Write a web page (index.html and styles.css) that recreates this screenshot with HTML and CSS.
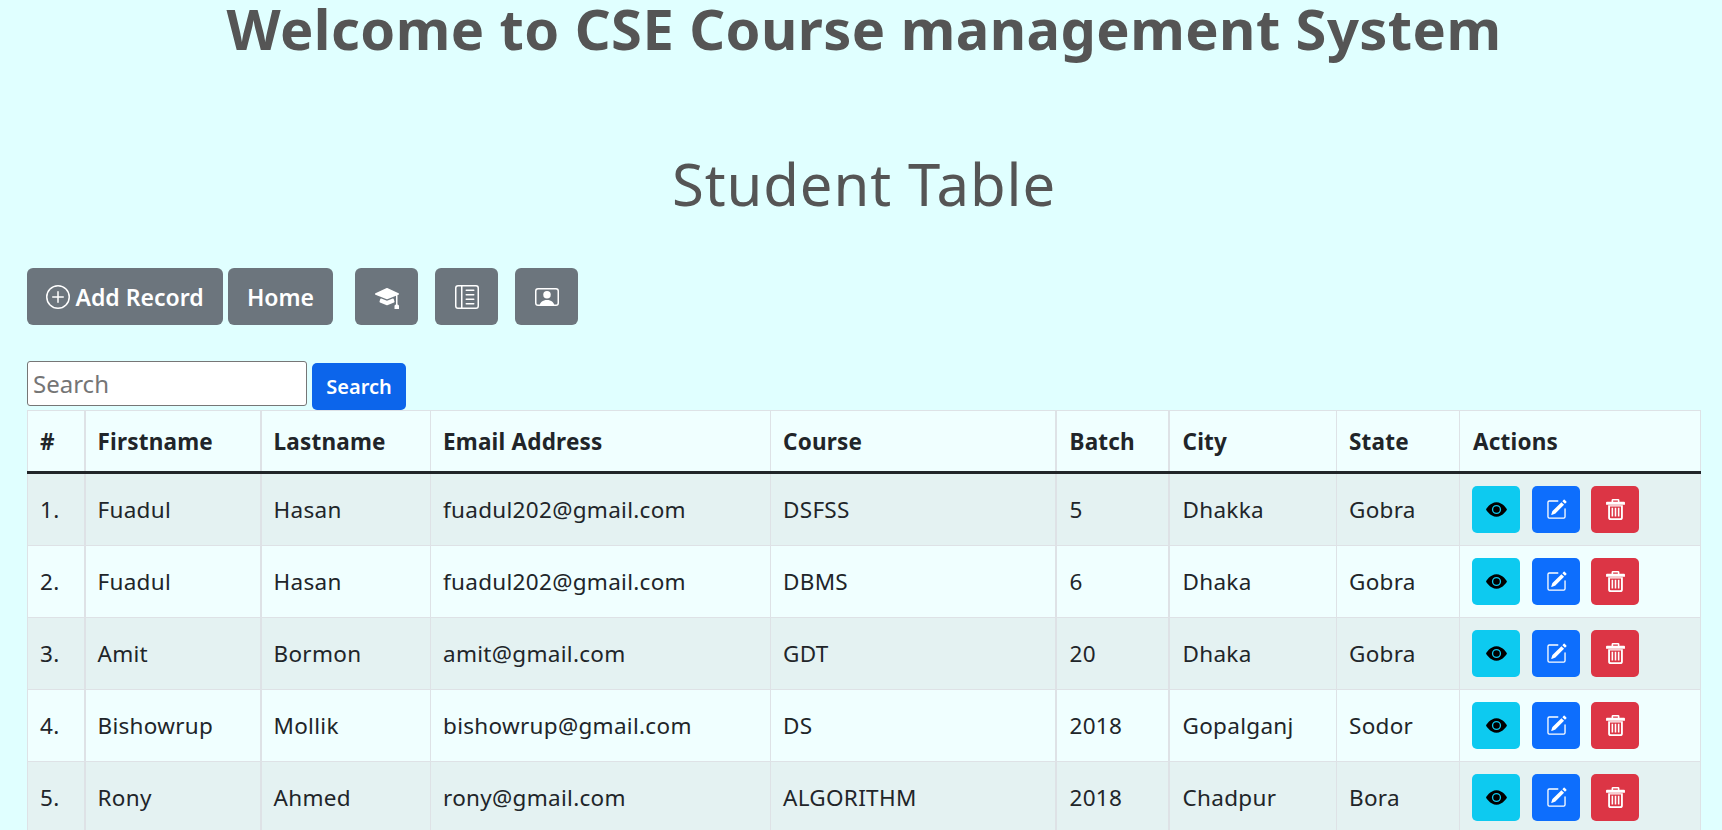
FILE: index.html
```html
<!DOCTYPE html>
<html lang="en">
<head>
<meta charset="utf-8">
<title>Student Table</title>
<link rel="stylesheet" href="styles.css">
</head>
<body>
<h1 class="title">Welcome to CSE Course management System</h1>
<h2 class="subtitle">Student Table</h2>
<div class="toolbar">
  <a class="btn btn-gray btn-add"><svg class="ic-plus" viewBox="0 0 16 16"><path d="M8 15A7 7 0 1 1 8 1a7 7 0 0 1 0 14zm0 1A8 8 0 1 0 8 0a8 8 0 0 0 0 16z"/><path d="M8 4a.5.5 0 0 1 .5.5v3h3a.5.5 0 0 1 0 1h-3v3a.5.5 0 0 1-1 0v-3h-3a.5.5 0 0 1 0-1h3v-3A.5.5 0 0 1 8 4z"/></svg>Add Record</a>
  <a class="btn btn-gray btn-home">Home</a>
  <a class="btn btn-gray btn-icon"><svg viewBox="0 0 16 16"><path d="M8.211 2.047a.5.5 0 0 0-.422 0l-7.5 3.5a.5.5 0 0 0 .025.917l7.5 3a.5.5 0 0 0 .372 0L14 7.14V13a1 1 0 0 0-1 1v2h3v-2a1 1 0 0 0-1-1V6.739l.686-.275a.5.5 0 0 0 .025-.917l-7.5-3.5Z"/><path d="M4.176 9.032a.5.5 0 0 0-.656.327l-.5 1.7a.5.5 0 0 0 .294.605l4.5 1.8a.5.5 0 0 0 .372 0l4.5-1.8a.5.5 0 0 0 .294-.605l-.5-1.7a.5.5 0 0 0-.656-.327L8 10.466 4.176 9.032Z"/></svg></a>
  <a class="btn btn-gray btn-icon"><svg viewBox="0 0 16 16"><path d="M12.5 3a.5.5 0 0 1 0 1h-5a.5.5 0 0 1 0-1h5zm0 3a.5.5 0 0 1 0 1h-5a.5.5 0 0 1 0-1h5zm.5 3.5a.5.5 0 0 0-.5-.5h-5a.5.5 0 0 0 0 1h5a.5.5 0 0 0 .5-.5zm-.5 2.5a.5.5 0 0 1 0 1h-5a.5.5 0 0 1 0-1h5z"/><path d="M16 2a2 2 0 0 0-2-2H2a2 2 0 0 0-2 2v12a2 2 0 0 0 2 2h12a2 2 0 0 0 2-2V2zM4 1v14H2a1 1 0 0 1-1-1V2a1 1 0 0 1 1-1h2zm1 0h9a1 1 0 0 1 1 1v12a1 1 0 0 1-1 1H5V1z"/></svg></a>
  <a class="btn btn-gray btn-icon"><svg viewBox="0 0 16 16"><path d="M8 9.05a2.5 2.5 0 1 0 0-5 2.5 2.5 0 0 0 0 5Z"/><path d="M2 2a2 2 0 0 0-2 2v8a2 2 0 0 0 2 2h12a2 2 0 0 0 2-2V4a2 2 0 0 0-2-2H2Zm10.798 11c-.453-1.27-1.76-3-4.798-3-3.037 0-4.345 1.73-4.798 3H2a1 1 0 0 1-1-1V4a1 1 0 0 1 1-1h12a1 1 0 0 1 1 1v8a1 1 0 0 1-1 1h-1.202Z"/></svg></a>
</div>
<form class="search">
  <input class="search-input" type="text" placeholder="Search">
  <button class="search-btn" type="button">Search</button>
</form>
<table class="students">
  <colgroup>
    <col class="c-num"><col class="c-first"><col class="c-last"><col class="c-email"><col class="c-course"><col class="c-batch"><col class="c-city"><col class="c-state"><col class="c-actions">
  </colgroup>
  <thead>
    <tr><th>#</th><th>Firstname</th><th>Lastname</th><th>Email Address</th><th>Course</th><th>Batch</th><th>City</th><th>State</th><th>Actions</th></tr>
  </thead>
  <tbody>
    <tr><td>1.</td><td>Fuadul</td><td>Hasan</td><td>fuadul202@gmail.com</td><td>DSFSS</td><td>5</td><td>Dhakka</td><td>Gobra</td><td class="actions"><a class="act act-view"><svg viewBox="0 0 16 16"><use href="#i-eye"/></svg></a><a class="act act-edit"><svg viewBox="0 0 16 16"><use href="#i-edit"/></svg></a><a class="act act-del"><svg viewBox="0 0 16 16"><use href="#i-trash"/></svg></a></td></tr>
    <tr><td>2.</td><td>Fuadul</td><td>Hasan</td><td>fuadul202@gmail.com</td><td>DBMS</td><td>6</td><td>Dhaka</td><td>Gobra</td><td class="actions"><a class="act act-view"><svg viewBox="0 0 16 16"><use href="#i-eye"/></svg></a><a class="act act-edit"><svg viewBox="0 0 16 16"><use href="#i-edit"/></svg></a><a class="act act-del"><svg viewBox="0 0 16 16"><use href="#i-trash"/></svg></a></td></tr>
    <tr><td>3.</td><td>Amit</td><td>Bormon</td><td>amit@gmail.com</td><td>GDT</td><td>20</td><td>Dhaka</td><td>Gobra</td><td class="actions"><a class="act act-view"><svg viewBox="0 0 16 16"><use href="#i-eye"/></svg></a><a class="act act-edit"><svg viewBox="0 0 16 16"><use href="#i-edit"/></svg></a><a class="act act-del"><svg viewBox="0 0 16 16"><use href="#i-trash"/></svg></a></td></tr>
    <tr><td>4.</td><td>Bishowrup</td><td>Mollik</td><td>bishowrup@gmail.com</td><td>DS</td><td>2018</td><td>Gopalganj</td><td>Sodor</td><td class="actions"><a class="act act-view"><svg viewBox="0 0 16 16"><use href="#i-eye"/></svg></a><a class="act act-edit"><svg viewBox="0 0 16 16"><use href="#i-edit"/></svg></a><a class="act act-del"><svg viewBox="0 0 16 16"><use href="#i-trash"/></svg></a></td></tr>
    <tr><td>5.</td><td>Rony</td><td>Ahmed</td><td>rony@gmail.com</td><td>ALGORITHM</td><td>2018</td><td>Chadpur</td><td>Bora</td><td class="actions"><a class="act act-view"><svg viewBox="0 0 16 16"><use href="#i-eye"/></svg></a><a class="act act-edit"><svg viewBox="0 0 16 16"><use href="#i-edit"/></svg></a><a class="act act-del"><svg viewBox="0 0 16 16"><use href="#i-trash"/></svg></a></td></tr>
  </tbody>
</table>
<svg class="defs" aria-hidden="true">
  <symbol id="i-eye" viewBox="0 0 16 16"><path d="M10.5 8a2.5 2.5 0 1 1-5 0 2.5 2.5 0 0 1 5 0z"/><path d="M0 8s3-5.5 8-5.5S16 8 16 8s-3 5.5-8 5.5S0 8 0 8zm8 3.5a3.5 3.5 0 1 0 0-7 3.5 3.5 0 0 0 0 7z"/></symbol>
  <symbol id="i-edit" viewBox="0 0 16 16"><path d="M15.502 1.94a.5.5 0 0 1 0 .706L14.459 3.69l-2-2L13.502.646a.5.5 0 0 1 .707 0l1.293 1.293zm-1.75 2.456-2-2L4.939 9.21a.5.5 0 0 0-.121.196l-.805 2.414a.25.25 0 0 0 .316.316l2.414-.805a.5.5 0 0 0 .196-.12l6.813-6.814z"/><path fill-rule="evenodd" d="M1 13.5A1.5 1.5 0 0 0 2.5 15h11a1.5 1.5 0 0 0 1.5-1.5v-6a.5.5 0 0 0-1 0v6a.5.5 0 0 1-.5.5h-11a.5.5 0 0 1-.5-.5v-11a.5.5 0 0 1 .5-.5H9a.5.5 0 0 0 0-1H2.5A1.5 1.5 0 0 0 1 2.5v11z"/></symbol>
  <symbol id="i-trash" viewBox="0 0 16 16"><path fill-rule="evenodd" d="M5 2V1a1 1 0 0 1 1-1h4a1 1 0 0 1 1 1v1h3.5a.7.7 0 0 1 .7.7V4.4H.8V2.7a.7.7 0 0 1 .7-.7H5zm1.2 0h3.6V1.2H6.2V2z"/><path fill-rule="evenodd" d="M2.4 4.8h11.2V14a2 2 0 0 1-2 2H4.4a2 2 0 0 1-2-2V4.8zm1.4 1V14a.6.6 0 0 0 .6.6h7.2a.6.6 0 0 0 .6-.6V5.8H3.8z"/><path d="M5 6.6h1.2v6.8H5zM7.4 6.6h1.2v6.8H7.4zM9.8 6.6h1.2v6.8H9.8z"/></symbol>
</svg>
</body>
</html>
```
FILE: styles.css
```css
html, body { margin: 0; padding: 0; }
body {
  height: 830px;
  overflow: hidden;
  background: #e0ffff;
  color: #212529;
  font-family: "Noto Sans", "Liberation Sans", sans-serif;
  font-size: 22.5px;
  letter-spacing: .3px;
}
.title {
  margin: 0 0 6px;
  padding-left: 6px;
  font-size: 56px;
  line-height: 56px;
  font-weight: 700;
  letter-spacing: .43px;
  color: #555;
  text-align: center;
}
.subtitle {
  margin: 0;
  padding: 88px 0 0 6px;
  height: 118px;
  font-size: 58px;
  line-height: 68px;
  font-weight: 400;
  letter-spacing: .9px;
  color: #555;
  text-align: center;
}
.toolbar {
  display: flex;
  align-items: stretch;
  height: 57px;
  padding-left: 27px;
}
.btn {
  display: flex;
  align-items: center;
  justify-content: center;
  border-radius: 6px;
  font-size: 23px;
  font-weight: 600;
  letter-spacing: 0;
  color: #fff;
  box-sizing: border-box;
}
.btn svg { fill: currentColor; }
.btn-gray { background: #6c757d; }
.btn-add { width: 196px; margin-right: 5px; }
.ic-plus { width: 24px; height: 24px; margin-right: 5px; }
.btn-home { width: 105px; margin-right: 22px; }
.btn-icon { width: 63px; margin-right: 17px; }
.btn-icon svg { width: 24px; height: 24px; }
.search {
  display: flex;
  align-items: flex-start;
  height: 49px;
  margin-top: 36px;
  padding-left: 27px;
}
.search-input {
  width: 280px;
  height: 45px;
  box-sizing: border-box;
  padding: 1px 5px;
  border: 1px solid #767676;
  border-radius: 3px;
  background: #fff;
  font-family: inherit;
  font-size: 24px;
}
.search-input::placeholder { color: #757575; }
.search-btn {
  width: 94px;
  height: 47px;
  margin: 2px 0 0 5px;
  border: 0;
  border-radius: 5px;
  background: #0c65eb;
  color: #fff;
  font-family: inherit;
  font-size: 20px;
  font-weight: 600;
}
.students {
  width: 1673px;
  margin-left: 27px;
  table-layout: fixed;
  border-collapse: collapse;
}
.c-num { width: 57px; }
.c-first { width: 176px; }
.c-last { width: 170px; }
.c-email { width: 340px; }
.c-course { width: 285px; }
.c-batch { width: 113px; }
.c-city { width: 168px; }
.c-state { width: 123px; }
.c-actions { width: 241px; }
.students th, .students td {
  border: 1px solid #dee2e6;
  padding: 0 12px;
  text-align: left;
  white-space: nowrap;
  vertical-align: middle;
}
.students th:nth-child(2), .students td:nth-child(2),
.students th:nth-child(3), .students td:nth-child(3),
.students th:nth-child(6), .students td:nth-child(6),
.students th:nth-child(7), .students td:nth-child(7) { border-left-width: 2px; }
.students th:nth-child(6), .students td:nth-child(6),
.students th:nth-child(7), .students td:nth-child(7),
.students th:nth-child(9) { padding-left: 13px; }
.students thead tr { height: 62px; background: #f0ffff; }
.students th { font-weight: 700; letter-spacing: .2px; border-bottom: 3px solid #212529; }
.students tbody tr { height: 72px; }
.students tbody tr:first-child { height: 73px; }
.students tbody tr:nth-child(odd) { background: #e4f2f2; }
.students tbody tr:nth-child(even) { background: #f0ffff; }
.students .actions { padding: 0 0 0 12px; }
.act {
  display: inline-flex;
  align-items: center;
  justify-content: center;
  vertical-align: middle;
  width: 48px;
  height: 47px;
  border-radius: 5px;
  margin-right: 12px;
}
.act svg { width: 21px; height: 21px; fill: currentColor; }
.act-view { background: #0dcaf0; color: #000; }
.act-edit { background: #0d6efd; color: #fff; margin-right: 11px; }
.act-del { background: #dc3545; color: #fff; }
.defs { display: none; }
```
